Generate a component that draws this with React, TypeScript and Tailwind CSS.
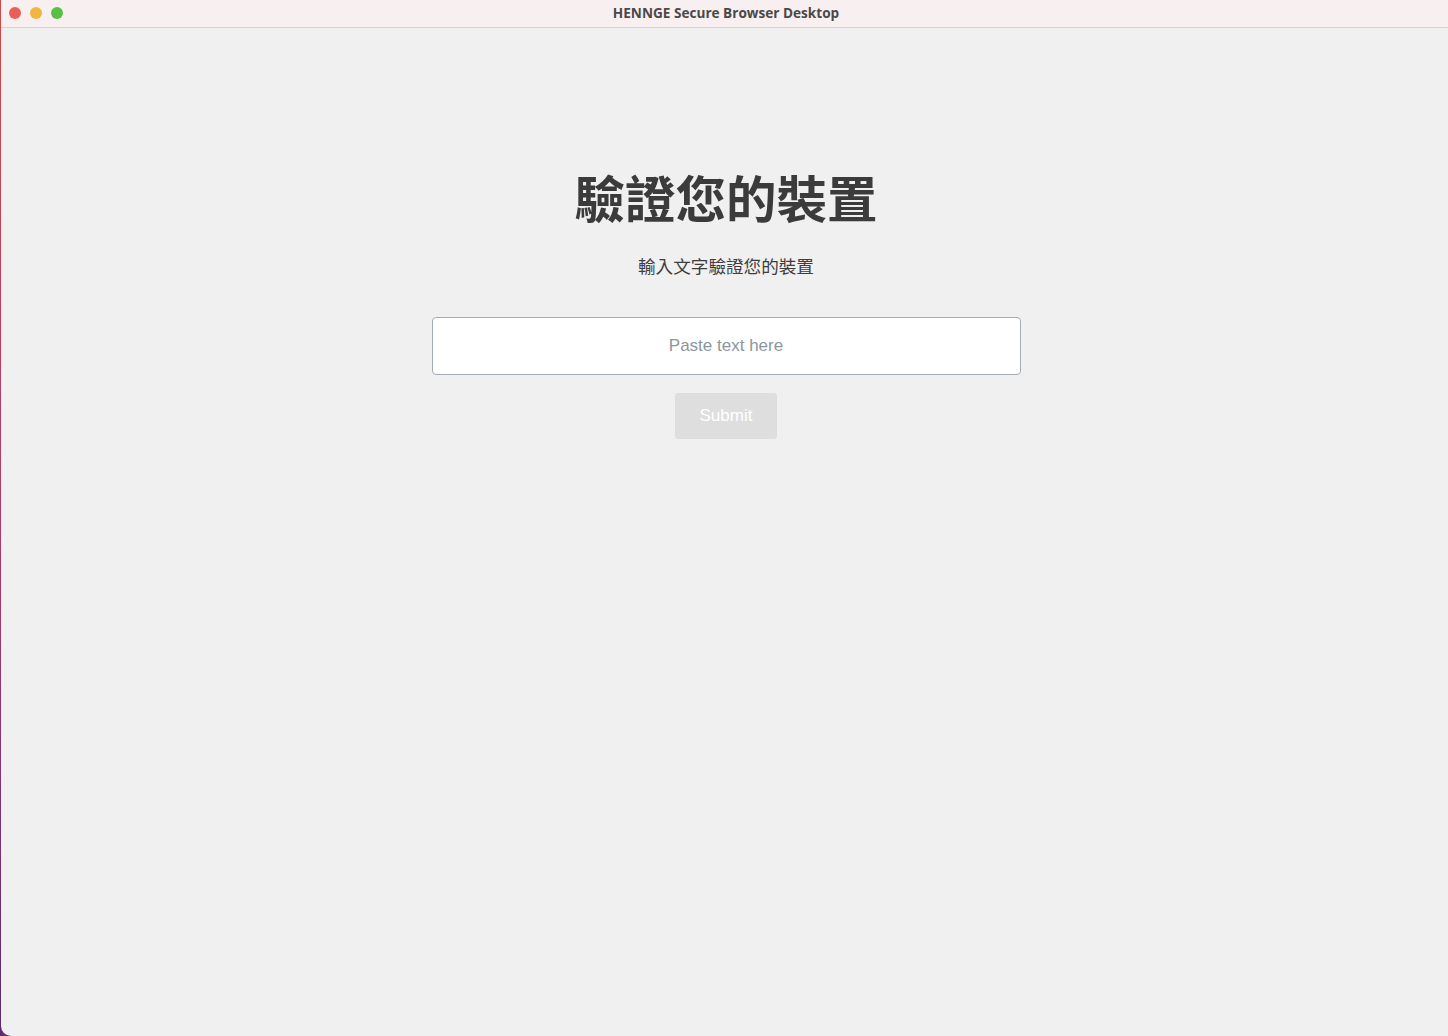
import React from "react";

export default function App() {
  return (
    <div className="w-[1448px] h-[1036px] flex bg-[#6b2a6e] overflow-hidden" style={{ fontFamily: '"Liberation Sans", "Noto Sans CJK TC", sans-serif' }}>
      <div className="w-[1px] h-full bg-gradient-to-b from-[#d24a4a] via-[#b03a6a] to-[#5a2a70]" />
      <div className="flex-1 flex flex-col bg-[#f0f0f0] rounded-bl-[10px] overflow-hidden">
        <div className="h-[28px] shrink-0 relative flex items-center justify-center bg-[#f8f0f0] border-b border-[#d8d2d2]">
          <div className="absolute left-[8px] top-[7px] flex gap-[9px]">
            <div className="w-[12px] h-[12px] rounded-full bg-[#ec5f57]" />
            <div className="w-[12px] h-[12px] rounded-full bg-[#f2b53f]" />
            <div className="w-[12px] h-[12px] rounded-full bg-[#58c143]" />
          </div>
          <span className="pl-[3px] text-[13.6px] font-bold text-[#4b4848]" style={{ fontFamily: '"Open Sans", "Liberation Sans", sans-serif' }}>HENNGE Secure Browser Desktop</span>
        </div>
        <div className="flex-1 flex flex-col items-center pt-[135px] pl-[3px]">
          <h1 className="text-[50.5px] leading-[66px] font-bold text-[#3b3b3b]" style={{ fontFamily: '"Noto Sans CJK TC", sans-serif' }}>驗證您的裝置</h1>
          <p className="mt-[25px] text-[17.6px] leading-[24px] text-[#3d3d3d]" style={{ fontFamily: '"Noto Sans CJK TC", sans-serif' }}>輸入文字驗證您的裝置</p>
          <input
            placeholder="Paste text here"
            className="mt-[39px] w-[589px] h-[58px] rounded-[4px] border border-[#a3acb5] bg-white text-center text-[17px] text-[#333] placeholder:text-[#8c969e] outline-none"
            style={{ fontFamily: '"Liberation Sans", sans-serif' }}
          />
          <button className="mt-[18px] w-[102px] h-[46px] rounded-[3px] bg-[#dedede] text-white text-[17px]" style={{ fontFamily: '"Liberation Sans", sans-serif' }}>Submit</button>
        </div>
      </div>
    </div>
  );
}
